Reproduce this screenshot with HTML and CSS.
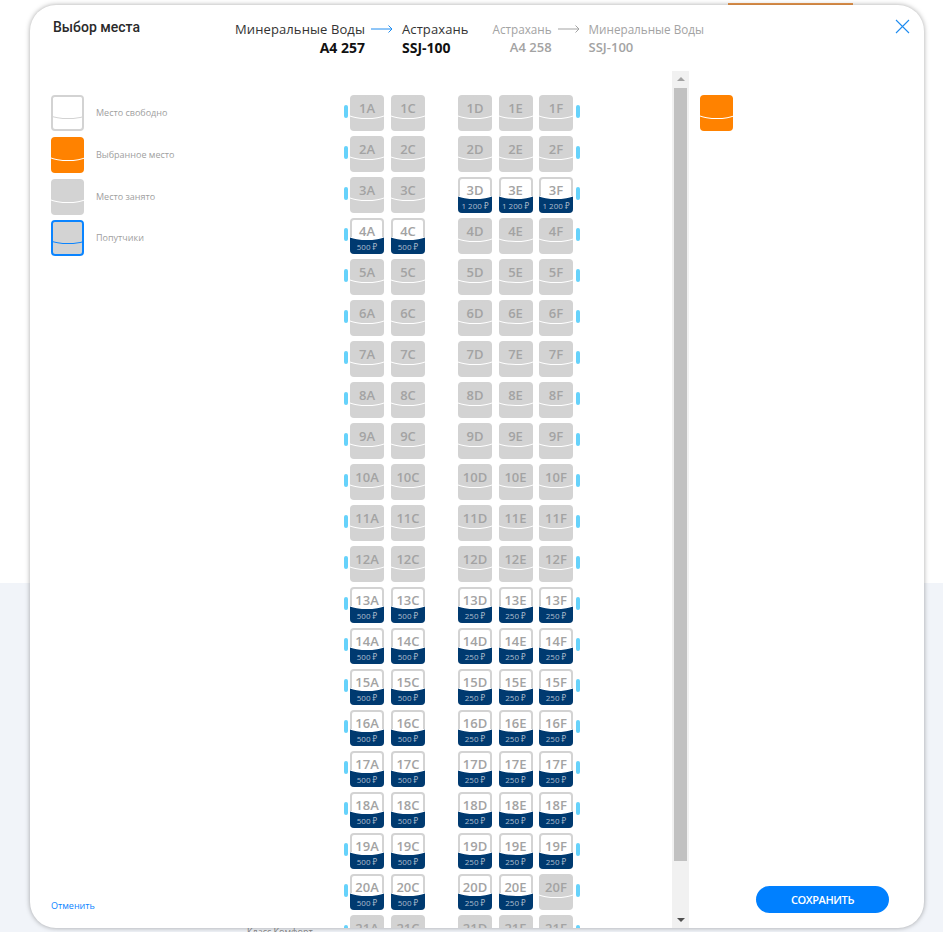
FILE: index.html
```html
<!DOCTYPE html>
<html lang="ru">
<head>
    <meta charset="UTF-8">
    <meta name="viewport" content="width=device-width, initial-scale=1.0">
    <title>Выбор места</title>
    <link rel="stylesheet" href="styles.css">
</head>
<body>
    <div class="page-top"><div class="page-button"></div></div>
    <div class="page-bottom"><div class="page-note">Класс Комфорт</div></div>

    <div class="modal">
        <div class="modal-header">
            <div class="modal-title">Выбор места</div>
            <div class="route">
                <div class="city city-from">Минеральные Воды</div>
                <svg class="arrow" width="22" height="8" viewBox="0 0 22 8"><path d="M0 4H21M17.500 .5L21 4L17.500 7.500" fill="none" stroke="currentColor"/></svg>
                <div class="city">Астрахань</div>
                <div class="flight flight-from">A4 257</div>
                <div></div>
                <div class="flight">SSJ-100</div>
            </div>
            <div class="route route-off">
                <div class="city city-from">Астрахань</div>
                <svg class="arrow" width="22" height="8" viewBox="0 0 22 8"><path d="M0 4H21M17.500 .5L21 4L17.500 7.500" fill="none" stroke="currentColor"/></svg>
                <div class="city">Минеральные Воды</div>
                <div class="flight flight-from">A4 258</div>
                <div></div>
                <div class="flight">SSJ-100</div>
            </div>
            <svg class="close" width="15" height="15" viewBox="0 0 15 15"><path d="M1 1L14 14M14 1L1 14" stroke="#1e8cf0" stroke-width="1.100"/></svg>
        </div>

        <div class="modal-body">
            <div class="legend">
                <div class="legend-items">
                    <div class="legend-item"><div class="icon icon-free"></div>Место свободно</div>
                    <div class="legend-item"><div class="icon icon-selected"></div>Выбранное место</div>
                    <div class="legend-item"><div class="icon"></div>Место занято</div>
                    <div class="legend-item"><div class="icon icon-friends"></div>Попутчики</div>
                </div>
                <div class="cancel">Отменить</div>
            </div>

            <div class="cabin">
                <div class="row"><div class="seat">1A</div><div class="seat">1C</div><div class="seat">1D</div><div class="seat">1E</div><div class="seat">1F</div></div>
                <div class="row"><div class="seat">2A</div><div class="seat">2C</div><div class="seat">2D</div><div class="seat">2E</div><div class="seat">2F</div></div>
                <div class="row"><div class="seat">3A</div><div class="seat">3C</div><div class="seat free">3D<span>1 200 ₽</span></div><div class="seat free">3E<span>1 200 ₽</span></div><div class="seat free">3F<span>1 200 ₽</span></div></div>
                <div class="row"><div class="seat free">4A<span>500 ₽</span></div><div class="seat free">4C<span>500 ₽</span></div><div class="seat">4D</div><div class="seat">4E</div><div class="seat">4F</div></div>
                <div class="row"><div class="seat">5A</div><div class="seat">5C</div><div class="seat">5D</div><div class="seat">5E</div><div class="seat">5F</div></div>
                <div class="row"><div class="seat">6A</div><div class="seat">6C</div><div class="seat">6D</div><div class="seat">6E</div><div class="seat">6F</div></div>
                <div class="row"><div class="seat">7A</div><div class="seat">7C</div><div class="seat">7D</div><div class="seat">7E</div><div class="seat">7F</div></div>
                <div class="row"><div class="seat">8A</div><div class="seat">8C</div><div class="seat">8D</div><div class="seat">8E</div><div class="seat">8F</div></div>
                <div class="row"><div class="seat">9A</div><div class="seat">9C</div><div class="seat">9D</div><div class="seat">9E</div><div class="seat">9F</div></div>
                <div class="row"><div class="seat">10A</div><div class="seat">10C</div><div class="seat">10D</div><div class="seat">10E</div><div class="seat">10F</div></div>
                <div class="row"><div class="seat">11A</div><div class="seat">11C</div><div class="seat">11D</div><div class="seat">11E</div><div class="seat">11F</div></div>
                <div class="row"><div class="seat">12A</div><div class="seat">12C</div><div class="seat">12D</div><div class="seat">12E</div><div class="seat">12F</div></div>
                <div class="row"><div class="seat free">13A<span>500 ₽</span></div><div class="seat free">13C<span>500 ₽</span></div><div class="seat free">13D<span>250 ₽</span></div><div class="seat free">13E<span>250 ₽</span></div><div class="seat free">13F<span>250 ₽</span></div></div>
                <div class="row"><div class="seat free">14A<span>500 ₽</span></div><div class="seat free">14C<span>500 ₽</span></div><div class="seat free">14D<span>250 ₽</span></div><div class="seat free">14E<span>250 ₽</span></div><div class="seat free">14F<span>250 ₽</span></div></div>
                <div class="row"><div class="seat free">15A<span>500 ₽</span></div><div class="seat free">15C<span>500 ₽</span></div><div class="seat free">15D<span>250 ₽</span></div><div class="seat free">15E<span>250 ₽</span></div><div class="seat free">15F<span>250 ₽</span></div></div>
                <div class="row"><div class="seat free">16A<span>500 ₽</span></div><div class="seat free">16C<span>500 ₽</span></div><div class="seat free">16D<span>250 ₽</span></div><div class="seat free">16E<span>250 ₽</span></div><div class="seat free">16F<span>250 ₽</span></div></div>
                <div class="row"><div class="seat free">17A<span>500 ₽</span></div><div class="seat free">17C<span>500 ₽</span></div><div class="seat free">17D<span>250 ₽</span></div><div class="seat free">17E<span>250 ₽</span></div><div class="seat free">17F<span>250 ₽</span></div></div>
                <div class="row"><div class="seat free">18A<span>500 ₽</span></div><div class="seat free">18C<span>500 ₽</span></div><div class="seat free">18D<span>250 ₽</span></div><div class="seat free">18E<span>250 ₽</span></div><div class="seat free">18F<span>250 ₽</span></div></div>
                <div class="row"><div class="seat free">19A<span>500 ₽</span></div><div class="seat free">19C<span>500 ₽</span></div><div class="seat free">19D<span>250 ₽</span></div><div class="seat free">19E<span>250 ₽</span></div><div class="seat free">19F<span>250 ₽</span></div></div>
                <div class="row"><div class="seat free">20A<span>500 ₽</span></div><div class="seat free">20C<span>500 ₽</span></div><div class="seat free">20D<span>250 ₽</span></div><div class="seat free">20E<span>250 ₽</span></div><div class="seat">20F</div></div>
                <div class="row"><div class="seat">21A</div><div class="seat">21C</div><div class="seat">21D</div><div class="seat">21E</div><div class="seat">21F</div></div>
            </div>

            <div class="scrollbar">
                <div class="scroll-up"></div>
                <div class="scroll-thumb"></div>
                <div class="scroll-down"></div>
            </div>

            <div class="side">
                <div class="icon icon-selected"></div>
                <div class="save">СОХРАНИТЬ</div>
            </div>
        </div>
    </div>
</body>
</html>
```

FILE: styles.css
```css
* {
    box-sizing: border-box;
}

html, body {
    height: 100%;
}

body {
    margin: 0;
    overflow: hidden;
    display: flex;
    flex-direction: column;
    font-family: "Open Sans", "Noto Sans", sans-serif;
    background-color: #fff;
}

.page-top {
    height: 583px;
    flex-shrink: 0;
    padding-left: 728px;
    padding-top: 3px;
}

.page-button {
    width: 125px;
    height: 10px;
    background-color: #ed9a4f;
}

.page-bottom {
    flex: 1;
    padding: 342px 0 0 247px;
    background-color: #f1f4f9;
}

.page-note {
    font-size: 9px;
    line-height: 14px;
    color: #888;
}

.modal {
    position: absolute;
    left: 30px;
    top: 5px;
    width: 894px;
    height: 923px;
    display: flex;
    flex-direction: column;
    background-color: #fff;
    border-radius: 26px;
    box-shadow: 0 0 5px rgba(0, 0, 0, 0.35);
    overflow: hidden;
}

.modal-header {
    position: relative;
    height: 66px;
    flex-shrink: 0;
    display: flex;
    padding: 14px 0 0 23px;
}

.modal-title {
    width: 182px;
    font-family: Roboto, sans-serif;
    font-size: 14px;
    font-weight: 500;
    line-height: 16px;
    color: #2a2a2a;
}

.route {
    display: grid;
    grid-template-columns: 130px 37px auto;
    grid-auto-rows: 18px;
    align-items: center;
    margin-top: 1px;
    color: #333;
}

.route-off {
    grid-template-columns: 60px 37px auto;
    margin-left: 23px;
    color: #a3a3a3;
}

.arrow {
    justify-self: start;
    margin-left: 6px;
    color: #1e8cf0;
}

.route-off .arrow {
    color: #a3a3a3;
}

.city {
    font-size: 13px;
    letter-spacing: 0.1px;
    white-space: nowrap;
}

.route-off .city {
    font-size: 11.700px;
    letter-spacing: 0;
}

.city-from, .flight-from {
    text-align: right;
}

.flight {
    font-size: 14px;
    font-weight: 700;
    color: #111;
}

.route-off .flight {
    font-size: 13px;
    font-weight: 600;
    color: #a3a3a3;
}

.close {
    position: absolute;
    right: 14px;
    top: 14px;
}

.modal-body {
    flex: 1;
    display: flex;
    min-height: 0;
}

.legend {
    width: 314px;
    padding: 24px 0 16px 21px;
    display: flex;
    flex-direction: column;
    justify-content: space-between;
}

.legend-items {
    display: flex;
    flex-direction: column;
    gap: 6px;
}

.legend-item {
    display: flex;
    align-items: center;
    gap: 12px;
    font-size: 9px;
    line-height: 12px;
    color: #a0a0a0;
}

.legend-item:last-child {
    margin-top: -1px;
}

.cancel {
    font-size: 9px;
    color: #0a84ff;
}

/* the ellipse behind icon and seat is filled like its parent, so only its
   shadow shows: that gives the thin curved line across the cushion */
.icon, .seat {
    position: relative;
    isolation: isolate;
    overflow: hidden;
    flex-shrink: 0;
    height: 36px;
    background-color: #d3d3d3;
    border-radius: 4px;
}

.icon {
    width: 33px;
}

.icon::after, .seat::after {
    content: "";
    position: absolute;
    z-index: -1;
    left: -10px;
    top: 1px;
    width: 54px;
    height: 22px;
    background-color: #d3d3d3;
    border-radius: 50%;
    box-shadow: 0 1px 0 #fff;
}

.icon-free {
    background-color: #fff;
    border: 2px solid #d3d3d3;
}

.icon-free::after {
    top: -1px;
    left: -12px;
    background-color: #fff;
    box-shadow: 0 1px 0 #d3d3d3;
}

.icon-selected {
    background-color: #ff8200;
}

.icon-selected::after {
    background-color: #ff8200;
}

.icon-friends {
    border: 2px solid #0a84ff;
}

.icon-friends::after {
    top: -1px;
    left: -12px;
    box-shadow: 0 1px 0 #0a84ff;
}

.cabin {
    width: 328px;
    height: 100%;
    overflow: hidden;
    padding-top: 24px;
}

.row {
    display: flex;
    height: 36px;
    margin-bottom: 5px;
}

.row::before, .row::after {
    content: "";
    width: 4px;
    height: 13px;
    margin-top: 10px;
    background-color: #66d2fb;
    border-radius: 2px;
}

.row::after {
    margin-left: 2.500px;
}

.seat {
    width: 34px;
    margin-left: 6.500px;
    padding-top: 5px;
    text-align: center;
    font-size: 13px;
    font-weight: 600;
    line-height: 17px;
    color: #a3a3a3;
}

.seat:nth-child(1) {
    margin-left: 2px;
}

.seat:nth-child(2) {
    margin-left: 7px;
}

.seat:nth-child(3) {
    margin-left: 33px;
}

.seat.free {
    background-color: #fff;
    box-shadow: inset 0 0 0 2px #d3d3d3;
}

.seat.free::after {
    display: none;
}

.seat span {
    position: absolute;
    left: 0;
    right: 0;
    top: 19px;
    bottom: 0;
    overflow: hidden;
    padding-top: 3px;
    background-color: #003a70;
    font-size: 8px;
    font-weight: 400;
    line-height: 13px;
    color: #aebdcd;
    white-space: nowrap;
}

.seat span::before {
    content: "";
    position: absolute;
    left: -10px;
    top: -19px;
    width: 54px;
    height: 22px;
    background-color: #fff;
    border-radius: 50%;
}

.scrollbar {
    width: 17px;
    height: 100%;
    flex-shrink: 0;
    display: flex;
    flex-direction: column;
    align-items: center;
    background-color: #f1f1f1;
}

.scroll-up, .scroll-down {
    width: 0;
    height: 0;
    border-left: 4px solid transparent;
    border-right: 4px solid transparent;
}

.scroll-up {
    margin-top: 6px;
    border-bottom: 4px solid #a3a3a3;
}

.scroll-thumb {
    width: 13px;
    height: 773px;
    margin-top: 7px;
    background-color: #c1c1c1;
}

.scroll-down {
    margin-top: auto;
    margin-bottom: 6px;
    border-top: 4px solid #505050;
}

.side {
    flex: 1;
    display: flex;
    flex-direction: column;
    align-items: flex-start;
    justify-content: space-between;
    padding: 24px 35px 15px 11px;
}

.save {
    align-self: flex-end;
    width: 133px;
    height: 27px;
    border-radius: 14px;
    background-color: #0080ff;
    color: #fff;
    text-align: center;
    font-size: 11px;
    font-weight: 600;
    letter-spacing: -0.4px;
    line-height: 27px;
}
```
